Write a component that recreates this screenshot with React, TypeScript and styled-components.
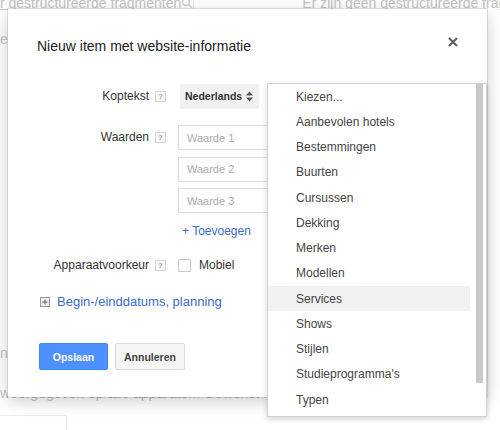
import React from "react";
import styled, { createGlobalStyle } from "styled-components";

const GlobalStyle = createGlobalStyle`
  html, body { margin: 0; padding: 0; }
  body {
    width: 500px;
    height: 430px;
    overflow: hidden;
    background: #fff;
    font-family: "Liberation Sans", Arial, Helvetica, sans-serif;
  }
`;

const Page = styled.div`
  position: relative;
  width: 500px;
  height: 430px;
  overflow: hidden;
  display: flex;
  flex-direction: column;
  color: #c3c3c3;
  font-size: 14px;
`;

const BgTop = styled.div`
  display: flex;
  align-items: center;
  height: 18px;
  margin-top: -6px;
  white-space: nowrap;
`;

const BgLink = styled.span`
  text-decoration: underline;
  width: 192px;
`;

const BgSearch = styled.div`
  display: flex;
  align-items: center;
  width: 15px;
  height: 18px;
  border-right: 1px solid #e6e6e6;
`;

const BgRight = styled.span`
  margin-left: 108px;
  overflow: hidden;
`;

const BgLine = styled.div<{ $top: number }>`
  margin-top: ${(p) => p.$top}px;
  height: 16px;
  line-height: 16px;
  white-space: nowrap;
`;

const BgBox = styled.div`
  margin-top: 14px;
  width: 66px;
  height: 20px;
  border-top: 1px solid #ececec;
  border-right: 1px solid #ececec;
`;

const Dialog = styled.div`
  position: absolute;
  left: 8px;
  top: 9px;
  width: 479px;
  height: 388px;
  box-sizing: border-box;
  background: #fff;
  box-shadow: 0 0 0 1px rgba(0, 0, 0, 0.1), 0 4px 16px rgba(0, 0, 0, 0.2);
  padding: 28px 29px 27px 29px;
  display: flex;
  flex-direction: column;
  color: #333;
`;

const TitleRow = styled.div`
  display: flex;
  justify-content: space-between;
  align-items: flex-start;
`;

const Title = styled.h1`
  margin: 0;
  font-size: 14px;
  line-height: 18px;
  font-weight: normal;
  color: #222;
`;

const Close = styled.button`
  border: 0;
  background: none;
  padding: 0;
  width: 10px;
  height: 10px;
  display: flex;
  cursor: pointer;
`;

const Form = styled.div`
  display: flex;
  flex-direction: column;
  margin-top: 29px;
`;

const Row = styled.div<{ $top?: number; $line?: number }>`
  display: flex;
  align-items: flex-start;
  margin-top: ${(p) => p.$top ?? 0}px;
  line-height: ${(p) => p.$line ?? 25}px;
`;

const Label = styled.div`
  width: 112px;
  text-align: right;
  font-size: 12px;
  color: #333;
`;

const Help = styled.span<{ $top: number }>`
  box-sizing: border-box;
  width: 11px;
  height: 11px;
  margin: ${(p) => p.$top}px 12px 0 6px;
  border: 1px solid #d6d6d6;
  background: #fafafa;
  color: #a0a0a0;
  font-size: 8px;
  line-height: 9px;
  text-align: center;
  font-weight: bold;
`;

const Select = styled.div`
  box-sizing: border-box;
  width: 79px;
  height: 25px;
  margin-left: 2px;
  background: #f1f1f1;
  border-radius: 2px;
  padding: 0 6px 0 5px;
  display: flex;
  align-items: center;
  justify-content: space-between;
  font-weight: bold;
  font-size: 10.5px;
  color: #333;
`;

const Inputs = styled.div`
  display: flex;
  flex-direction: column;
  gap: 6.5px;
`;

const Input = styled.input`
  box-sizing: border-box;
  width: 190px;
  height: 25px;
  margin: 0;
  border: 1px solid #dcdcdc;
  border-radius: 0;
  padding: 0 8px;
  font-family: inherit;
  font-size: 11px;
  color: #333;
  outline: none;
  &::placeholder { color: #ababab; }
`;

const AddLink = styled.a`
  align-self: flex-start;
  margin: 10px 0 0 145px;
  line-height: 16px;
  font-size: 12px;
  color: #3b6cc8;
  text-decoration: none;
`;

const Checkbox = styled.span`
  box-sizing: border-box;
  width: 13px;
  height: 13px;
  margin-top: 2px;
  border: 1px solid #c8c8c8;
  border-radius: 1px;
  background: #fff;
`;

const CheckLabel = styled.span`
  margin-left: 8px;
  font-size: 12px;
  color: #333;
`;

const Expander = styled.div`
  display: flex;
  align-items: center;
  margin: 20px 0 0 3px;
  line-height: 18px;
  font-size: 13px;
  color: #3b6cc8;
  gap: 7px;
`;

const Buttons = styled.div`
  display: flex;
  gap: 7px;
  margin: 32px 0 0 2px;
`;

const Button = styled.button<{ $primary?: boolean }>`
  box-sizing: border-box;
  min-width: 69px;
  height: 27px;
  border-radius: 2px;
  padding: 0 8px;
  font-family: inherit;
  font-weight: bold;
  font-size: 10.5px;
  cursor: pointer;
  background: ${(p) => (p.$primary ? "#4d90fe" : "#f5f5f5")};
  border: 1px solid ${(p) => (p.$primary ? "#3f84f4" : "#dcdcdc")};
  color: ${(p) => (p.$primary ? "#fff" : "#444")};
`;

const Menu = styled.div`
  position: absolute;
  left: 259px;
  top: 74px;
  width: 220px;
  height: 334px;
  box-sizing: border-box;
  background: #fff;
  border: 1px solid #d2d2d2;
  box-shadow: 0 2px 6px rgba(0, 0, 0, 0.18);
  display: flex;
`;

const List = styled.ul`
  list-style: none;
  margin: 0;
  padding: 0;
  width: 202px;
`;

const Item = styled.li<{ $active?: boolean }>`
  height: 25.25px;
  display: flex;
  align-items: center;
  padding-left: 28px;
  font-size: 12px;
  color: #444;
  background: ${(p) => (p.$active ? "#f1f1f1" : "transparent")};
`;

const ScrollTrack = styled.div`
  width: 7px;
  margin-left: 6px;
`;

const Thumb = styled.div`
  height: 299px;
  background: #c9c9c9;
`;

const items = [
  "Kiezen...",
  "Aanbevolen hotels",
  "Bestemmingen",
  "Buurten",
  "Cursussen",
  "Dekking",
  "Merken",
  "Modellen",
  "Services",
  "Shows",
  "Stijlen",
  "Studieprogramma's",
  "Typen",
];

export default function App() {
  return (
    <>
      <GlobalStyle />
      <Page>
        <BgTop>
          <BgLink>r gestructureerde fragmenten</BgLink>
          <BgSearch>
            <svg width="12" height="12" viewBox="0 0 12 12">
              <circle cx="5" cy="5" r="3.5" fill="none" stroke="#d0d0d0" strokeWidth="1.5" />
              <line x1="7.5" y1="7.5" x2="11" y2="11" stroke="#d0d0d0" strokeWidth="1.5" />
            </svg>
          </BgSearch>
          <BgRight>Er zijn geen gestructureerde fragmenten</BgRight>
        </BgTop>
        <BgLine $top={19}>e</BgLine>
        <BgLine $top={298}>n</BgLine>
        <BgLine $top={24}>weergegeven op alle apparaten. Gewenst</BgLine>
        <BgBox />

        <Dialog>
          <TitleRow>
            <Title>Nieuw item met website-informatie</Title>
            <Close aria-label="Sluiten">
              <svg width="10" height="10" viewBox="0 0 10 10">
                <path d="M1 1 L9 9 M9 1 L1 9" stroke="#5f5f5f" strokeWidth="2.2" />
              </svg>
            </Close>
          </TitleRow>

          <Form>
            <Row>
              <Label>Koptekst</Label>
              <Help $top={7}>?</Help>
              <Select>
                <span>Nederlands</span>
                <svg width="7" height="11" viewBox="0 0 7 11">
                  <path d="M0 4.5 L3.5 0.5 L7 4.5 Z M0 6.5 L3.5 10.5 L7 6.5 Z" fill="#555" />
                </svg>
              </Select>
            </Row>

            <Row $top={16}>
              <Label>Waarden</Label>
              <Help $top={7}>?</Help>
              <Inputs>
                <Input placeholder="Waarde 1" />
                <Input placeholder="Waarde 2" />
                <Input placeholder="Waarde 3" />
              </Inputs>
            </Row>

            <AddLink href="#">+ Toevoegen</AddLink>

            <Row $top={18} $line={16}>
              <Label>Apparaatvoorkeur</Label>
              <Help $top={2.5}>?</Help>
              <Checkbox />
              <CheckLabel>Mobiel</CheckLabel>
            </Row>

            <Expander>
              <svg width="10" height="10" viewBox="0 0 10 10">
                <rect x="0.5" y="0.5" width="9" height="9" fill="#eee" stroke="#999" />
                <path d="M2.5 5 H7.5 M5 2.5 V7.5" stroke="#555" strokeWidth="1" />
              </svg>
              <span>Begin-/einddatums, planning</span>
            </Expander>

            <Buttons>
              <Button $primary>Opslaan</Button>
              <Button>Annuleren</Button>
            </Buttons>
          </Form>

          <Menu>
            <List>
              {items.map((it) => (
                <Item key={it} $active={it === "Services"}>
                  {it}
                </Item>
              ))}
            </List>
            <ScrollTrack>
              <Thumb />
            </ScrollTrack>
          </Menu>
        </Dialog>
      </Page>
    </>
  );
}
